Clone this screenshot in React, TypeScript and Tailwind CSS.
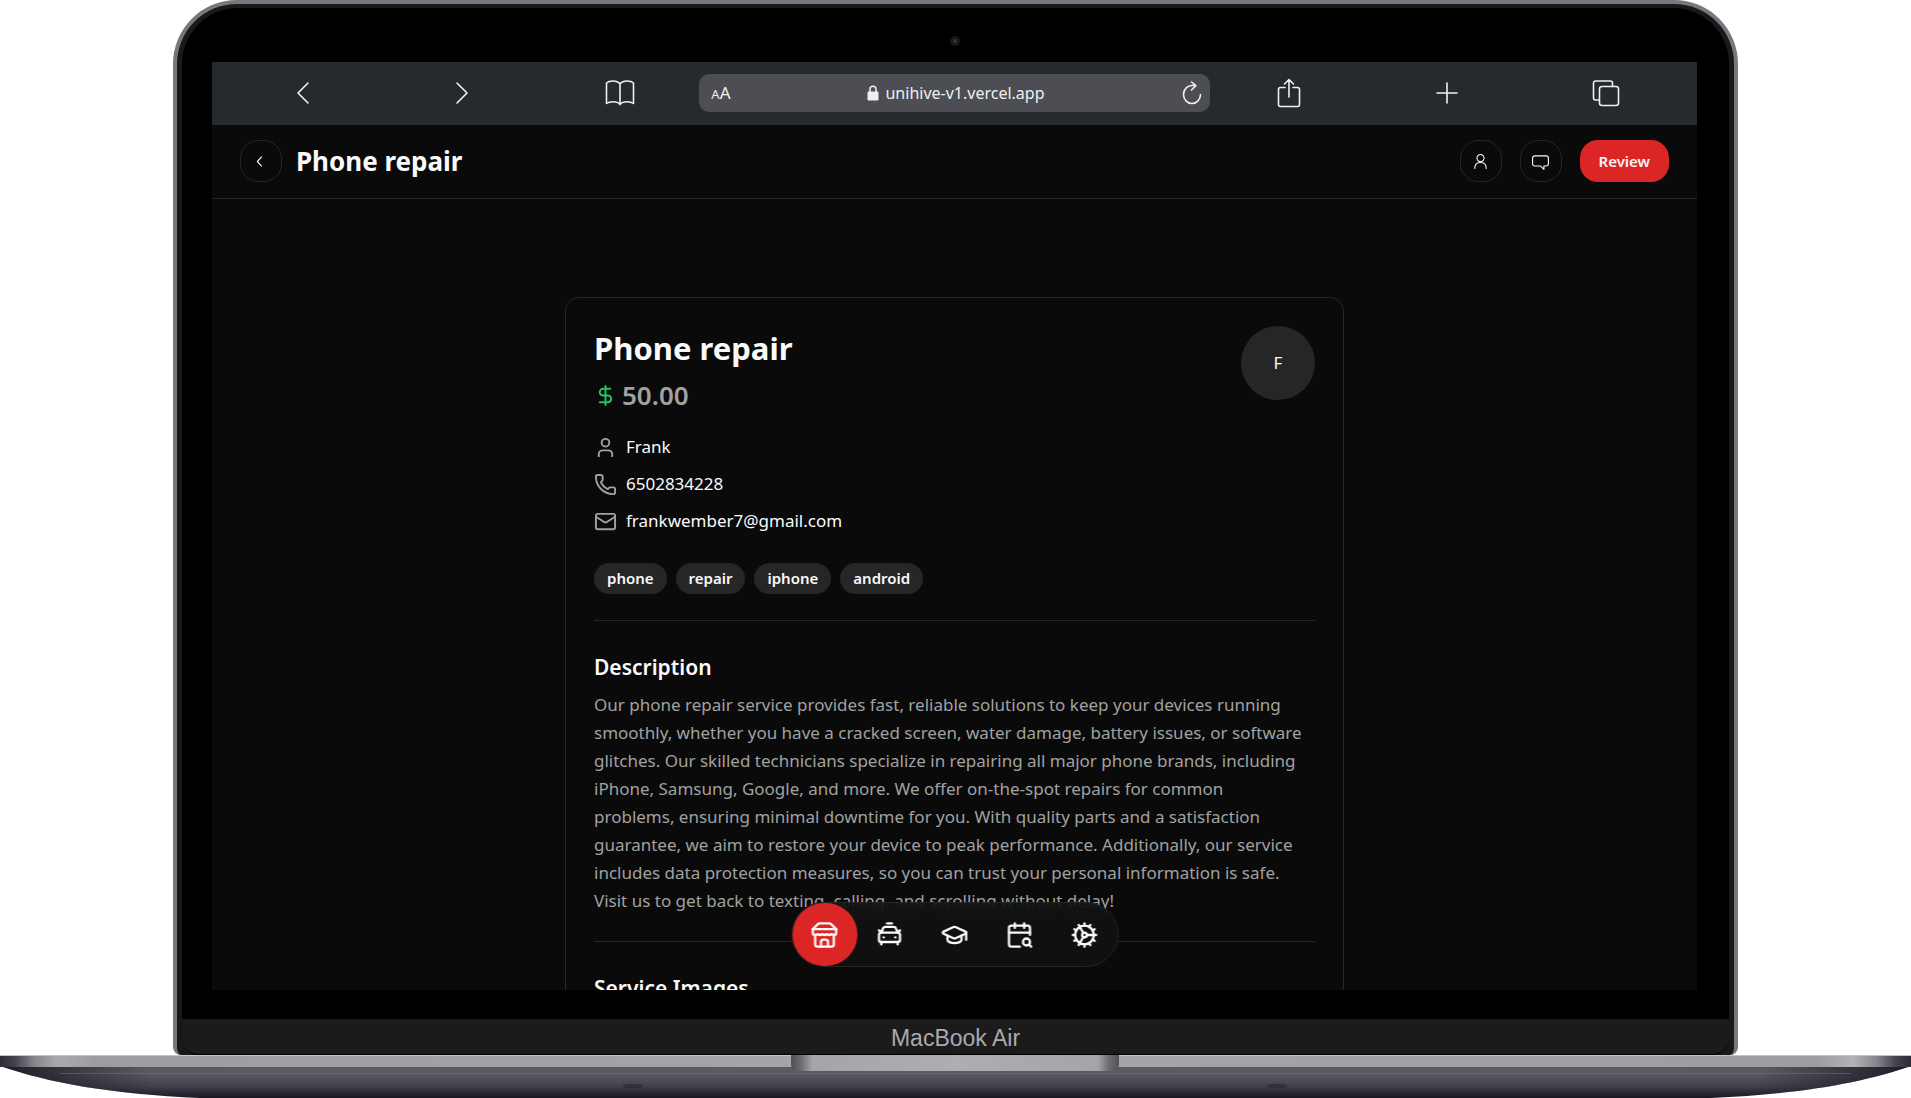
import type { ReactNode } from "react";
import {
  CalendarSearch,
  CarTaxiFront,
  Cog,
  DollarSign,
  GraduationCap,
  Mail,
  Phone,
  User,
} from "lucide-react";
import { RxChatBubble, RxChevronLeft, RxPerson } from "react-icons/rx";

function BarButton({ label, children }: { label: string; children: ReactNode }) {
  return (
    <button type="button" aria-label={label} className="flex items-center justify-center text-[#f0f0f0]">
      <svg
        className="size-8"
        viewBox="0 0 32 32"
        fill="none"
        stroke="currentColor"
        strokeWidth={1.6}
        strokeLinecap="round"
        strokeLinejoin="round"
        aria-hidden="true"
      >
        {children}
      </svg>
    </button>
  );
}

function BrowserBar() {
  return (
    <div className="grid h-[63px] shrink-0 grid-cols-[1fr_1fr_1fr_3.22fr_1fr_1fr_1fr] items-center bg-[#252a2e] px-3 pb-[2px]">
      <BarButton label="Back">
        <path d="M21 6 11 16l10 10" />
      </BarButton>
      <BarButton label="Forward">
        <path d="m11 6 10 10-10 10" />
      </BarButton>
      <BarButton label="Bookmarks">
        <path d="M16 7c-1.500-2-4-3-7-3-2.600 0-5 .5-6.500 2v20.500C4 25.300 6.300 24.800 9 24.800c3 0 5.500.7 7 2.700 1.500-2 4-2.700 7-2.700 2.700 0 5 .5 6.500 1.700V6C28 4.500 25.600 4 23 4c-3 0-5.500 1-7 3Zm0 0v20.500" />
      </BarButton>
      <div className="flex h-[38px] items-center rounded-[10px] bg-[#4c4e53] pr-2 pl-3 text-[#f0f0f0]">
        <button type="button" aria-label="Text size" className="flex w-7 items-baseline">
          <span className="text-[13px]">A</span>
          <span className="text-[17px]">A</span>
        </button>
        <div className="flex flex-1 items-center justify-center gap-[6px]">
          <svg className="h-4 w-3" viewBox="0 0 12 16" aria-hidden="true">
            <path d="M3 7V4.200a3 3 0 0 1 6 0V7" fill="none" stroke="currentColor" strokeWidth="1.500" />
            <rect x="0.500" y="6.500" width="11" height="9" rx="1.200" fill="currentColor" />
          </svg>
          <input
            type="text"
            aria-label="Address"
            readOnly
            value="unihive-v1.vercel.app"
            className="h-8 w-[164px] bg-transparent text-base outline-none"
          />
        </div>
        <button type="button" aria-label="Reload" className="flex w-6 justify-end">
          <svg className="h-6 w-5" viewBox="0 0 20 24" fill="none" stroke="currentColor" strokeWidth="1.600" strokeLinecap="round" strokeLinejoin="round" aria-hidden="true">
            <path d="M18.500 13.500a8.500 9 0 1 1-8.500-9h3M9.500 1l4.300 3.700-4.300 4.300" />
          </svg>
        </button>
      </div>
      <BarButton label="Share">
        <path d="M12 10.500H7.500a2 2 0 0 0-2 2v15a2 2 0 0 0 2 2h17a2 2 0 0 0 2-2v-15a2 2 0 0 0-2-2H20M16 20V3M11.500 7 16 2.500 20.500 7" />
      </BarButton>
      <BarButton label="New tab">
        <path d="M16 6v20M6 16h20" />
      </BarButton>
      <BarButton label="Tabs">
        <path d="M9 23H5.500a2 2 0 0 1-2-2V6a2 2 0 0 1 2-2h15a2 2 0 0 1 2 2v3.500" />
        <rect x="9.500" y="9.500" width="19" height="19" rx="2.500" />
      </BarButton>
    </div>
  );
}

function IconButton({ label, children }: { label: string; children: ReactNode }) {
  return (
    <button
      type="button"
      aria-label={label}
      className="flex size-[42px] items-center justify-center rounded-[18px] border border-neutral-800 text-[17px] text-neutral-50"
    >
      {children}
    </button>
  );
}

function PageHeader() {
  return (
    <header className="flex h-[74px] shrink-0 items-center border-b border-neutral-800 px-7 pb-px">
      <IconButton label="Go back">
        <RxChevronLeft />
      </IconButton>
      <h1 className="ml-[14px] text-[26px] leading-9 font-bold text-neutral-50">Phone repair</h1>
      <div className="ml-auto flex items-center gap-[18px]">
        <IconButton label="Profile">
          <RxPerson />
        </IconButton>
        <IconButton label="Message">
          <RxChatBubble />
        </IconButton>
        <button type="button" className="h-[42px] rounded-[18px] bg-[#dc2626] px-[19px] text-[15px] font-semibold text-red-50">
          Review
        </button>
      </div>
    </header>
  );
}

const contacts = [
  { icon: User, text: "Frank" },
  { icon: Phone, text: "6502834228" },
  { icon: Mail, text: "frankwember7@gmail.com" },
];

const tags = ["phone", "repair", "iphone", "android"];

const description =
  "Our phone repair service provides fast, reliable solutions to keep your devices running smoothly, whether you have a cracked screen, water damage, battery issues, or software glitches. Our skilled technicians specialize in repairing all major phone brands, including iPhone, Samsung, Google, and more. We offer on-the-spot repairs for common problems, ensuring minimal downtime for you. With quality parts and a satisfaction guarantee, we aim to restore your device to peak performance. Additionally, our service includes data protection measures, so you can trust your personal information is safe. Visit us to get back to texting, calling, and scrolling without delay!";

function ServiceCard() {
  return (
    <article className="mx-auto mt-[98px] w-full max-w-[779px] rounded-[14px] border border-neutral-800 p-7 text-neutral-50">
      <div className="flex items-start justify-between">
        <div>
          <h2 className="text-[31px] leading-[45px] font-bold">Phone repair</h2>
          <p className="flex h-12 items-center gap-[5px] text-[26px] font-semibold text-[#a1a1a1]">
            <DollarSign className="size-[23px] text-[#22c55e]" />
            50.00
          </p>
        </div>
        <div className="flex size-[74px] items-center justify-center rounded-full bg-neutral-800 text-[17px]">F</div>
      </div>
      <ul className="mt-[14px] flex flex-col gap-[9px]">
        {contacts.map(({ icon: Icon, text }) => (
          <li key={text} className="flex h-7 items-center gap-[9px] text-[17px]">
            <Icon className="size-[23px] text-[#a1a1a1]" />
            {text}
          </li>
        ))}
      </ul>
      <ul className="mt-7 flex gap-[9px]">
        {tags.map((tag) => (
          <li key={tag} className="flex h-[31px] items-center rounded-full bg-neutral-800 px-[13px] text-[15px] font-semibold">
            {tag}
          </li>
        ))}
      </ul>
      <hr className="mt-[26px] border-neutral-800" />
      <section>
        <h3 className="mt-7 text-[21px] leading-9 font-semibold">Description</h3>
        <p className="mt-[6px] pr-[10px] text-[17px] leading-7 text-[#a1a1a1]">{description}</p>
      </section>
      <hr className="mt-[26px] border-neutral-800" />
      <section>
        <h3 className="mt-7 text-[21px] leading-9 font-semibold">Service Images</h3>
      </section>
    </article>
  );
}

function StoreIcon() {
  return (
    <svg className="size-7" viewBox="0 0 24 24" fill="none" stroke="currentColor" strokeWidth="2" strokeLinecap="round" strokeLinejoin="round" aria-hidden="true">
      <path d="m2 7 4.410-4.410A2 2 0 0 1 7.830 2h8.340a2 2 0 0 1 1.420.59L22 7" />
      <path d="M4 12v8a2 2 0 0 0 2 2h12a2 2 0 0 0 2-2v-8" />
      <path d="M15 22v-4a2 2 0 0 0-2-2h-2a2 2 0 0 0-2 2v4" />
      <path d="M2 7h20" />
      <path d="M22 7v3a2 2 0 0 1-2 2a2.700 2.700 0 0 1-1.590-.63.7.7 0 0 0-.82 0A2.700 2.700 0 0 1 16 12a2.700 2.700 0 0 1-1.590-.63.7.7 0 0 0-.82 0A2.700 2.700 0 0 1 12 12a2.700 2.700 0 0 1-1.590-.63.7.7 0 0 0-.82 0A2.700 2.700 0 0 1 8 12a2.700 2.700 0 0 1-1.590-.63.7.7 0 0 0-.82 0A2.700 2.700 0 0 1 4 12a2 2 0 0 1-2-2V7" />
    </svg>
  );
}

function Dock() {
  const item = "flex h-[63px] w-[65px] items-center justify-center rounded-full";
  return (
    <nav
      aria-label="Main"
      className="absolute bottom-[23px] left-1/2 flex -translate-x-1/2 rounded-full border border-neutral-800 bg-[#121212]/80 text-neutral-50 backdrop-blur-sm"
    >
      <a href="#services" aria-label="Services" className={`${item} bg-[#dc2626]`}>
        <StoreIcon />
      </a>
      <a href="#rides" aria-label="Rides" className={item}>
        <CarTaxiFront className="size-7" />
      </a>
      <a href="#tutoring" aria-label="Tutoring" className={item}>
        <GraduationCap className="size-7" />
      </a>
      <a href="#events" aria-label="Events" className={item}>
        <CalendarSearch className="size-7" />
      </a>
      <a href="#settings" aria-label="Settings" className={item}>
        <Cog className="size-7" />
      </a>
    </nav>
  );
}

function LaptopBase() {
  return (
    <svg className="block h-[43px] w-full shrink-0" viewBox="0 0 1911 43" preserveAspectRatio="none" aria-hidden="true">
      <defs>
        <linearGradient id="deck" x1="0" x2="1" y1="0" y2="0">
          <stop offset="0" stopColor="#2c2c36" />
          <stop offset="0.008" stopColor="#44444c" />
          <stop offset="0.018" stopColor="#85868b" />
          <stop offset="0.03" stopColor="#a9aaae" />
          <stop offset="0.05" stopColor="#9c9da2" />
          <stop offset="0.5" stopColor="#a6a7ab" />
          <stop offset="0.95" stopColor="#9c9da2" />
          <stop offset="0.97" stopColor="#b2b3b7" />
          <stop offset="0.982" stopColor="#85868b" />
          <stop offset="0.992" stopColor="#44444c" />
          <stop offset="1" stopColor="#2c2c36" />
        </linearGradient>
        <linearGradient id="belly" x1="0" x2="0" y1="0" y2="1">
          <stop offset="0" stopColor="#5a5b61" />
          <stop offset="0.2" stopColor="#5a5b62" />
          <stop offset="0.6" stopColor="#43444e" />
          <stop offset="1" stopColor="#171822" />
        </linearGradient>
        <linearGradient id="edges" x1="0" x2="1" y1="0" y2="0">
          <stop offset="0" stopColor="#1b1b26" stopOpacity="1" />
          <stop offset="0.08" stopColor="#1b1b26" stopOpacity="0" />
          <stop offset="0.92" stopColor="#1b1b26" stopOpacity="0" />
          <stop offset="1" stopColor="#1b1b26" stopOpacity="1" />
        </linearGradient>
        <linearGradient id="notch" x1="0" x2="1" y1="0" y2="0">
          <stop offset="0" stopColor="#505057" />
          <stop offset="0.03" stopColor="#6b6c72" />
          <stop offset="0.065" stopColor="#a4a5a9" />
          <stop offset="0.5" stopColor="#adaeb2" />
          <stop offset="0.935" stopColor="#a4a5a9" />
          <stop offset="0.97" stopColor="#6b6c72" />
          <stop offset="1" stopColor="#505057" />
        </linearGradient>
      </defs>
      <path d="M0 11C50 28 110 39 200 43H1711C1801 39 1861 28 1911 11Z" fill="url(#belly)" />
      <path d="M0 11C50 28 110 39 200 43H1711C1801 39 1861 28 1911 11Z" fill="url(#edges)" />
      <path d="M60 18.500H1851" stroke="#74757b" strokeWidth="1" opacity="0.5" />
      <rect width="1911" height="12" fill="url(#deck)" />
      <rect width="1911" height="1" fill="#c4c4c8" />
      <ellipse cx="633" cy="31" rx="10" ry="1.500" fill="#33343d" stroke="#2d2e37" />
      <ellipse cx="1277" cy="31" rx="10" ry="1.500" fill="#33343d" stroke="#2d2e37" />
      <path d="M791 0H1119V10Q1119 16 1107 16H803Q791 16 791 10Z" fill="url(#notch)" />
    </svg>
  );
}

export default function App() {
  return (
    <div className="flex h-screen flex-col overflow-hidden bg-white font-['Noto_Sans',sans-serif]">
      <div className="mx-auto flex min-h-0 w-[81.9%] flex-1 flex-col overflow-hidden rounded-t-[64px] rounded-b-[8px] border-4 border-b-0 border-[#77777f] bg-[#191919]">
        <div className="mx-[5px] mt-1 flex min-h-0 flex-1 flex-col rounded-t-[56px] bg-black pr-8 pl-[30px]">
          <div className="flex h-[54px] shrink-0 items-center justify-center pt-3">
            <span className="size-[10px] rounded-full border-[3px] border-[#17181a] bg-[#33353b]" />
          </div>
          <div className="relative flex min-h-0 flex-1 flex-col overflow-hidden bg-neutral-950">
            <BrowserBar />
            <PageHeader />
            <main className="min-h-0 flex-1 overflow-hidden">
              <ServiceCard />
            </main>
            <Dock />
          </div>
          <div className="h-[29px] shrink-0" />
        </div>
        <div className="mx-[5px] flex h-9 shrink-0 items-center justify-center rounded-b-[16px] border-b border-black bg-[#1b1b1b] pt-1 font-['Liberation_Sans',sans-serif] text-[23px] text-[#a9a9b0]">
          MacBook Air
        </div>
      </div>
      <LaptopBase />
    </div>
  );
}
